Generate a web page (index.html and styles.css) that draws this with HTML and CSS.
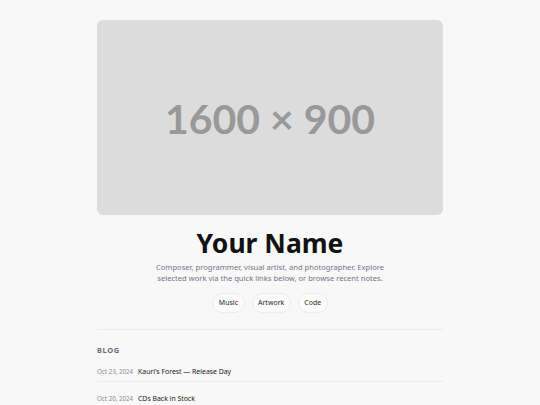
FILE: index.html
```html
<!DOCTYPE html>
<html>
<head>
<meta charset="utf-8">
<link rel="stylesheet" href="styles.css">
</head>
<body>
<main class="page">
  <div class="hero-image"><span class="hero-label">1600 × 900</span></div>
  <h1 class="name">Your Name</h1>
  <p class="bio">Composer, programmer, visual artist, and photographer. Explore selected work via the quick links below, or browse recent notes.</p>
  <nav class="links">
    <a class="chip" href="#">Music</a>
    <a class="chip" href="#">Artwork</a>
    <a class="chip" href="#">Code</a>
  </nav>
  <section class="blog">
    <h2 class="section-title">BLOG</h2>
    <ul class="posts">
      <li class="post"><span class="date">Oct 23, 2024</span><a class="title" href="#">Kauri's Forest — Release Day</a></li>
      <li class="post"><span class="date">Oct 20, 2024</span><a class="title" href="#">CDs Back in Stock</a></li>
    </ul>
  </section>
</main>
</body>
</html>
```
FILE: styles.css
```css
html, body {
  margin: 0;
  padding: 0;
  background: #f8f8f8;
}
body {
  font-family: "Noto Sans", "Open Sans", sans-serif;
  color: #141414;
}
.page {
  width: 346px;
  margin: 0 auto;
  padding-top: 20px;
  display: flex;
  flex-direction: column;
  align-items: center;
}
.hero-image {
  width: 100%;
  aspect-ratio: 16 / 9;
  background: #dcdcdc;
  border-radius: 6px;
  display: flex;
  align-items: center;
  justify-content: center;
}
.hero-label {
  font-family: Lato, sans-serif;
  font-weight: 700;
  font-size: 41px;
  color: #999999;
  margin-top: 2px;
}
.name {
  margin: 13.5px 0 0;
  font-size: 26.5px;
  line-height: 31px;
  font-weight: 700;
  color: #121212;
}
.bio {
  margin: 3px 0 0;
  width: 240px;
  text-align: center;
  font-size: 7.6px;
  line-height: 10.5px;
  color: #74748a;
}
.links {
  display: flex;
  gap: 7px;
  margin-top: 10px;
}
.chip {
  display: block;
  height: 18px;
  line-height: 18px;
  padding: 0 5.5px;
  border: 1px solid #ececec;
  border-radius: 10px;
  background: #fbfbfb;
  font-size: 7px;
  color: #2a2a2a;
  text-decoration: none;
}
.blog {
  width: 100%;
  margin-top: 16px;
  border-top: 1px solid #ebebeb;
}
.section-title {
  margin: 15px 0 0;
  font-size: 7.5px;
  line-height: 10px;
  font-weight: 700;
  letter-spacing: 0.6px;
  color: #6a6a7a;
}
.posts {
  list-style: none;
  margin: 0;
  padding: 0;
}
.post {
  display: flex;
  align-items: baseline;
  gap: 4px;
  padding: 12px 0 4px;
  line-height: 10px;
  border-bottom: 1px solid #ebebeb;
}
.date {
  width: 37px;
  font-size: 6.2px;
  color: #8a8a96;
}
.title {
  font-size: 6.9px;
  color: #1a1a1a;
  text-decoration: none;
}
```
